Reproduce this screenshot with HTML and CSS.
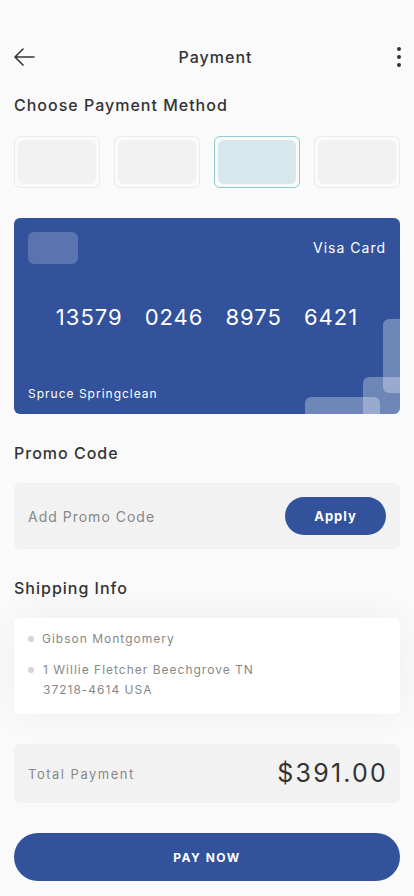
FILE: index.html
```html
<!DOCTYPE html>
<html>
<head>
<meta charset="utf-8">
<link rel="stylesheet" href="styles.css">
</head>
<body>
<div class="page">
  <header class="topbar">
    <svg class="icon-back" width="22" height="18" viewBox="0 0 22 18"><path d="M21 9H2M10 1L2 9l8 8" fill="none" stroke="#333" stroke-width="1.6" stroke-linecap="round" stroke-linejoin="round"/></svg>
    <h1 class="title">Payment</h1>
    <svg class="icon-more" width="6" height="20" viewBox="0 0 6 20"><circle cx="3" cy="2" r="2" fill="#333"/><circle cx="3" cy="10" r="2" fill="#333"/><circle cx="3" cy="18" r="2" fill="#333"/></svg>
  </header>

  <h2 class="section-title first">Choose Payment Method</h2>
  <div class="methods">
    <div class="method"><div class="method-inner"></div></div>
    <div class="method"><div class="method-inner"></div></div>
    <div class="method selected"><div class="method-inner"></div></div>
    <div class="method"><div class="method-inner"></div></div>
  </div>

  <div class="card">
    <div class="card-top">
      <div class="chip"></div>
      <div class="card-type">Visa Card</div>
    </div>
    <div class="card-number"><span>13579</span><span>0246</span><span>8975</span><span>6421</span></div>
    <div class="card-name">Spruce Springclean</div>
    <div class="deco deco-a"></div>
    <div class="deco deco-b"></div>
    <div class="deco deco-c"></div>
  </div>

  <h2 class="section-title">Promo Code</h2>
  <div class="promo">
    <span class="promo-placeholder">Add Promo Code</span>
    <button class="btn-apply">Apply</button>
  </div>

  <h2 class="section-title">Shipping Info</h2>
  <div class="shipping">
    <div class="ship-row"><span class="dot"></span><span>Gibson Montgomery</span></div>
    <div class="ship-row"><span class="dot"></span><span>1 Willie Fletcher Beechgrove TN<br>37218-4614 USA</span></div>
  </div>

  <div class="total">
    <span class="total-label">Total Payment</span>
    <span class="total-value">$391.00</span>
  </div>

  <button class="btn-pay">PAY NOW</button>
</div>
</body>
</html>
```

FILE: styles.css
```css
* { box-sizing: border-box; }
html, body { margin: 0; padding: 0; }
body {
  background: #fafafa;
  font-family: Inter, "Noto Sans", sans-serif;
  color: #333;
}
.page {
  width: 414px;
  height: 896px;
  padding: 0 14px;
  display: flex;
  flex-direction: column;
  overflow: hidden;
}
.topbar {
  display: flex;
  align-items: center;
  justify-content: space-between;
  height: 30px;
  margin-top: 42px;
}
.icon-back { margin-left: -1px; }
.icon-more { margin-right: -2px; }
.title {
  margin: 0;
  font-size: 16px;
  font-weight: 500;
  letter-spacing: 1px;
  color: #333;
}
.section-title {
  margin: 0;
  font-size: 16px;
  font-weight: 500;
  letter-spacing: 1px;
  color: #333;
  line-height: 20px;
}
.section-title.first { margin-top: 23px; }
.methods {
  display: grid;
  grid-template-columns: repeat(4, 1fr);
  gap: 14px;
  margin-top: 21px;
}
.method {
  height: 52px;
  border: 1px solid #ebebeb;
  border-radius: 6px;
  padding: 3px;
  background: #fafafa;
}
.method-inner {
  height: 100%;
  border-radius: 6px;
  background: #f2f2f2;
}
.method.selected { border-color: #8fcbd1; }
.method.selected .method-inner { background: #d6e8ec; }

.card {
  position: relative;
  margin-top: 30px;
  height: 196px;
  background: #32529b;
  border-radius: 6px;
  overflow: hidden;
  padding: 14px 14px 0 14px;
  color: #fff;
  display: flex;
  flex-direction: column;
}
.card-top {
  display: flex;
  justify-content: space-between;
  align-items: flex-start;
}
.chip {
  width: 50px;
  height: 32px;
  border-radius: 6px;
  background: rgba(255,255,255,0.2);
}
.card-type {
  margin-top: 7px;
  font-size: 14px;
  letter-spacing: 1px;
}
.card-number {
  display: flex;
  justify-content: center;
  gap: 22px;
  margin-top: 40px;
  font-size: 22px;
  letter-spacing: 1px;
  line-height: 26px;
  position: relative;
  z-index: 1;
}
.card-name {
  margin-top: 56px;
  font-size: 12px;
  letter-spacing: 1px;
  position: relative;
  z-index: 1;
}
.deco {
  position: absolute;
  border-radius: 6px;
  background: rgba(255,255,255,0.3);
}
.deco-a { left: 369px; top: 101px; width: 40px; height: 74px; }
.deco-b { left: 349px; top: 159px; width: 60px; height: 60px; }
.deco-c { left: 291px; top: 179px; width: 75px; height: 40px; }

.section-title + .promo, .section-title + .shipping { margin-top: 20px; }
.card + .section-title { margin-top: 29px; }
.promo {
  height: 66px;
  background: #f2f2f2;
  border-radius: 6px;
  display: flex;
  align-items: center;
  justify-content: space-between;
  padding: 0 14px;
}
.promo-placeholder {
  font-size: 14px;
  letter-spacing: 1px;
  color: #888;
}
.btn-apply {
  width: 101px;
  height: 38px;
  border: none;
  border-radius: 19px;
  background: #32529b;
  color: #fff;
  font-family: Inter, sans-serif;
  font-weight: 700;
  font-size: 13px;
  letter-spacing: 1px;
}
.promo + .section-title { margin-top: 29px; }
.shipping {
  background: #fff;
  border-radius: 6px;
  padding: 11px 14px 0 14px;
  height: 96px;
  box-shadow: 0 0 40px rgba(0,0,0,0.05);
}
.ship-row {
  display: flex;
  align-items: flex-start;
  gap: 9px;
  font-size: 12px;
  line-height: 20px;
  letter-spacing: 1px;
  color: #888;
  margin-bottom: 11px;
}
.dot {
  width: 6px;
  height: 6px;
  border-radius: 50%;
  background: #d4d4d8;
  margin: 7px 0 0 0;
  flex: none;
}
.ship-row:first-child span:last-child { margin-left: -1px; }
.total {
  margin-top: 30px;
  height: 59px;
  background: #f2f2f2;
  border-radius: 6px;
  display: flex;
  align-items: center;
  justify-content: space-between;
  padding: 0 14px;
}
.total-label {
  font-size: 13px;
  letter-spacing: 1.5px;
  color: #888;
}
.total-value {
  font-size: 25px;
  letter-spacing: 2.2px;
  color: #333;
  margin-top: -2px;
  margin-right: -2px;
}
.btn-pay {
  margin-top: 30px;
  height: 48px;
  border: none;
  border-radius: 24px;
  background: #32529b;
  color: #fff;
  font-family: Inter, sans-serif;
  font-weight: 700;
  font-size: 12px;
  letter-spacing: 1.5px;
}
```
